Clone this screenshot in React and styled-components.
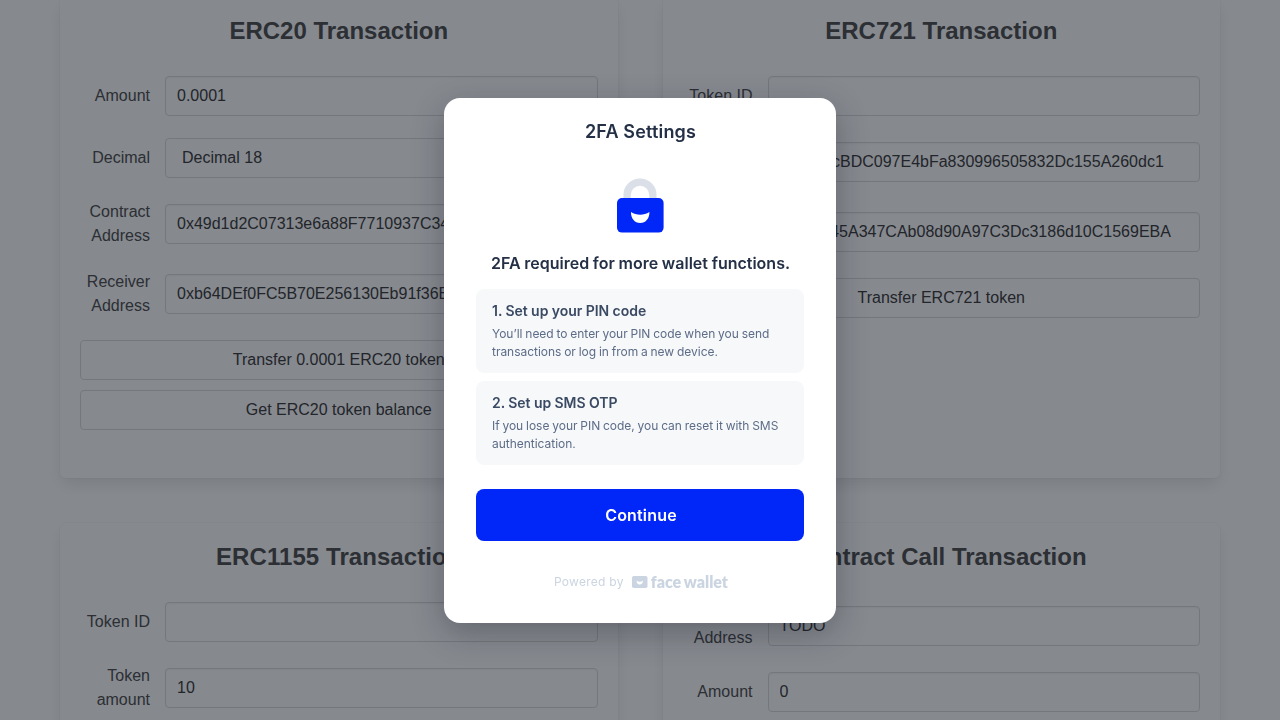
import React from "react";
import styled, { createGlobalStyle } from "styled-components";

const GlobalStyle = createGlobalStyle`
  *, *::before, *::after { box-sizing: border-box; }
  html, body { margin: 0; height: 100%; overflow: hidden; background: #fff; }
  html { text-rendering: optimizeLegibility; }
  body { font-family: "Liberation Sans", Arial, sans-serif; font-size: 16px; line-height: 1.5; color: #4a4a4a; }
  h1, h2, h3, p { margin: 0; }
`;

const Screen = styled.div`
  height: 720px;
  overflow: hidden;
`;

const Board = styled.main`
  display: grid;
  grid-template-columns: 1fr 1fr;
  gap: 45px;
  width: 1160px;
  margin: -3px auto 0;
`;

const Card = styled.section`
  display: flex;
  flex-direction: column;
  min-height: 481px;
  padding: 20px;
  border-radius: 6px;
  background: #fff;
  box-shadow: 0 8px 16px -2px rgba(10, 10, 10, 0.1), 0 0 0 1px rgba(10, 10, 10, 0.02);
`;

const CardTitle = styled.h2`
  margin-bottom: 32px;
  font-size: 24px;
  font-weight: 600;
  line-height: 27px;
  letter-spacing: ${(p) => p.$tracking || "normal"};
  text-align: center;
  color: #4a4a4a;
`;

const Rows = styled.div`
  display: flex;
  flex-direction: column;
  gap: 22px;
`;

const Row = styled.label`
  display: flex;
  align-items: center;
  gap: 15px;
`;

const Label = styled.span`
  width: 70px;
  flex: none;
  text-align: right;
`;

const Field = styled.input`
  flex: 1;
  min-width: 0;
  height: 40px;
  padding: 0 11px 0 ${(p) => (p.$select ? "16px" : "11px")};
  border: 1px solid #dbdbdb;
  border-radius: 4px;
  background: #fff;
  box-shadow: ${(p) => (p.$select ? "none" : "inset 0 1px 2px rgba(10, 10, 10, 0.05)")};
  font: inherit;
  color: #363636;
`;

const Actions = styled.div`
  display: flex;
  flex-direction: column;
  gap: 10px;
`;

const Action = styled.button`
  height: 40px;
  border: 1px solid #dbdbdb;
  border-radius: 4px;
  background: #fff;
  font: inherit;
  color: #363636;
`;

const Overlay = styled.div`
  position: fixed;
  inset: 0;
  display: flex;
  justify-content: center;
  align-items: flex-start;
  padding-top: 98px;
  background: rgba(14, 20, 30, 0.5);
`;

const Dialog = styled.div`
  display: flex;
  flex-direction: column;
  width: 392px;
  height: 525px;
  padding: 20px 32px 0;
  border-radius: 16px;
  background: #fff;
  box-shadow: 0 10px 32px rgba(20, 24, 40, 0.3);
  font-family: Inter, sans-serif;
`;

const DialogTitle = styled.h1`
  padding-left: 1px;
  font-size: 18px;
  font-weight: 600;
  line-height: 27px;
  letter-spacing: 0.17px;
  text-align: center;
  color: #243045;
`;

const Lock = styled.svg`
  display: block;
  width: 48px;
  height: 56px;
  margin: 33px auto 18px;
`;

const Lead = styled.h2`
  margin-bottom: 14px;
  padding-left: 1px;
  font-size: 16px;
  font-weight: 600;
  line-height: 23px;
  word-spacing: -0.3px;
  text-align: center;
  color: #243045;
`;

const Steps = styled.div`
  display: flex;
  flex-direction: column;
  gap: 8px;
`;

const Step = styled.section`
  height: 84px;
  padding: 12px 16px;
  border-radius: 8px;
  background: #f6f8fa;
`;

const StepTitle = styled.h3`
  margin-bottom: 4px;
  font-size: 14px;
  font-weight: 600;
  line-height: 20px;
  word-spacing: -0.2px;
  color: #3b4a63;
`;

const StepText = styled.p`
  font-size: 12px;
  line-height: 18px;
  letter-spacing: -0.025px;
  word-spacing: -0.5px;
  color: #5d6c87;
`;

const Continue = styled.button`
  height: 52px;
  margin-top: 24px;
  padding: 0 0 0 2px;
  border: 0;
  border-radius: 8px;
  background: #0026f8;
  font: 600 16px/24px Inter, sans-serif;
  letter-spacing: 0.18px;
  color: #fff;
`;

const Footer = styled.footer`
  display: flex;
  align-items: center;
  justify-content: center;
  height: 18px;
  margin-top: 32px;
  padding-left: 2px;
  font-size: 12px;
  line-height: 18px;
  letter-spacing: 0.27px;
  color: #cbd5e1;
`;

const BrandIcon = styled.svg`
  width: 16px;
  height: 12px;
  margin: 0 3px 0 8px;
`;

const BrandName = styled.span`
  font-family: Lato, sans-serif;
  font-size: 16px;
  font-weight: 800;
  letter-spacing: 0;
  word-spacing: -0.8px;
  white-space: nowrap;
`;

function TransactionCard({ title, tracking, rows, actions = [] }) {
  return (
    <Card>
      <CardTitle $tracking={tracking}>{title}</CardTitle>
      <Rows>
        {rows.map((row) => (
          <Row key={row.label}>
            <Label>{row.label}</Label>
            <Field readOnly value={row.value} $select={row.select} />
          </Row>
        ))}
        <Actions>
          {actions.map((text) => (
            <Action key={text}>{text}</Action>
          ))}
        </Actions>
      </Rows>
    </Card>
  );
}

const cards = [
  {
    title: "ERC20 Transaction",
    rows: [
      { label: "Amount", value: "0.0001" },
      { label: "Decimal", value: "Decimal 18", select: true },
      { label: "Contract Address", value: "0x49d1d2C07313e6a88F7710937C34" },
      { label: "Receiver Address", value: "0xb64DEf0FC5B70E256130Eb91f36E" },
    ],
    actions: ["Transfer 0.0001 ERC20 token", "Get ERC20 token balance"],
  },
  {
    title: "ERC721 Transaction",
    rows: [
      { label: "Token ID", value: "" },
      { label: "Contract Address", value: "0x3a72cBDC097E4bFa830996505832Dc155A260dc1" },
      { label: "Receiver Address", value: "0xc1c045A347CAb08d90A97C3Dc3186d10C1569EBA" },
    ],
    actions: ["Transfer ERC721 token"],
  },
  {
    title: "ERC1155 Transaction",
    tracking: "0.07px",
    rows: [
      { label: "Token ID", value: "" },
      { label: "Token amount", value: "10" },
    ],
  },
  {
    title: "Contract Call Transaction",
    rows: [
      { label: "Contract Address", value: "TODO" },
      { label: "Amount", value: "0" },
    ],
  },
];

export default function App() {
  return (
    <Screen>
      <GlobalStyle />
      <Board>
        {cards.map((card) => (
          <TransactionCard key={card.title} {...card} />
        ))}
      </Board>
      <Overlay>
        <Dialog role="dialog">
          <DialogTitle>2FA Settings</DialogTitle>
          <Lock viewBox="0 0 48 56">
            <path d="M11.100 22V17a12.900 12.900 0 0 1 25.800 0V22" fill="none" stroke="#dbdfe8" strokeWidth="7.300" />
            <rect x="1" y="20" width="46.6" height="34.6" rx="5" fill="#0026f8" />
            <path d="M15 34c5.500 3.600 12.900 3.600 18.400 0 .3 6.200-3.600 11-9.200 11S14.700 40.200 15 34z" fill="#fff" />
          </Lock>
          <Lead>2FA required for more wallet functions.</Lead>
          <Steps>
            <Step>
              <StepTitle>1. Set up your PIN code</StepTitle>
              <StepText>You’ll need to enter your PIN code when you send transactions or log in from a new device.</StepText>
            </Step>
            <Step>
              <StepTitle>2. Set up SMS OTP</StepTitle>
              <StepText>If you lose your PIN code, you can reset it with SMS authentication.</StepText>
            </Step>
          </Steps>
          <Continue>Continue</Continue>
          <Footer>
            <span>Powered by</span>
            <BrandIcon viewBox="0 0 16 12">
              <rect width="15.500" height="12" rx="1.800" fill="#cbd5e1" />
              <path d="M4.600 4.800c2 1.200 4.300 1.200 6.300 0 .1 2.200-1.200 3.800-3.150 3.800S4.500 7 4.600 4.800z" fill="#fff" />
            </BrandIcon>
            <BrandName>face wallet</BrandName>
          </Footer>
        </Dialog>
      </Overlay>
    </Screen>
  );
}
